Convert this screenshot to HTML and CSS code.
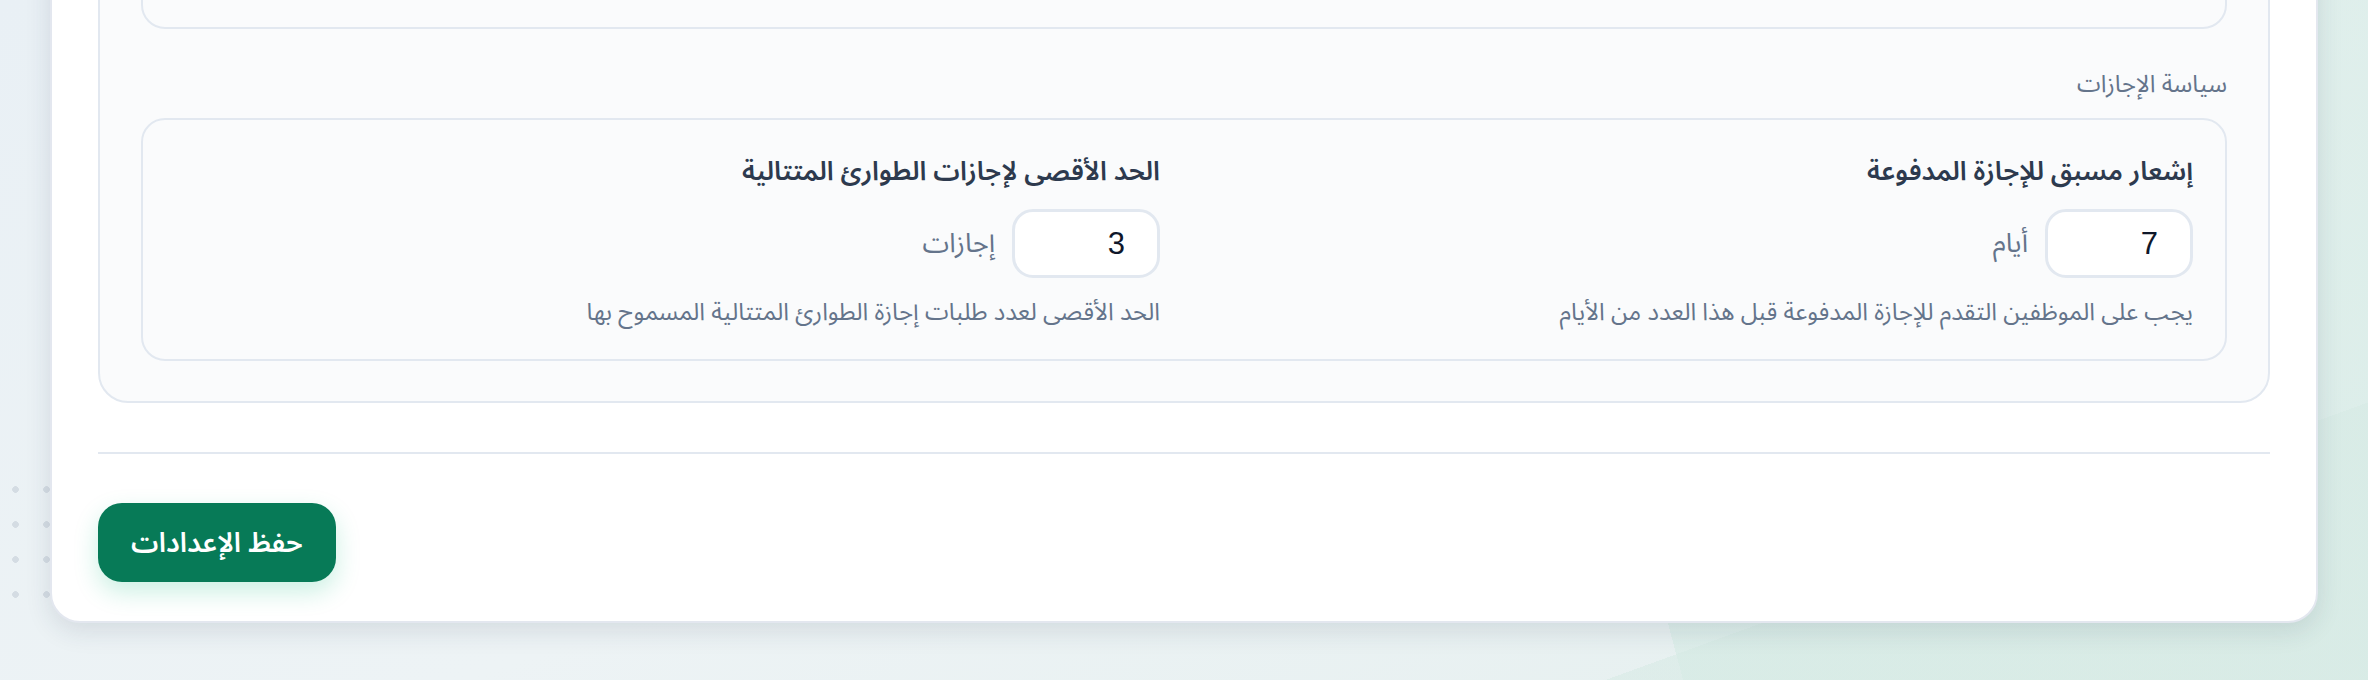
FILE: index.html
```html
<!DOCTYPE html>
<html lang="ar" dir="rtl">
<head>
<meta charset="utf-8">
<title>إعدادات الإجازات</title>
<link rel="stylesheet" href="styles.css">
</head>
<body>
<div class="dots"></div>
<main class="page">
  <section class="card">
    <div class="panel">
      <div class="prev-box"></div>
      <h3 class="group-label">سياسة الإجازات</h3>
      <div class="policy-box">
        <div class="field">
          <label class="field-title" for="notice">إشعار مسبق للإجازة المدفوعة</label>
          <div class="field-row">
            <input id="notice" class="num-input" type="number" value="7">
            <span class="unit">أيام</span>
          </div>
          <p class="help">يجب على الموظفين التقدم للإجازة المدفوعة قبل هذا العدد من الأيام</p>
        </div>
        <div class="field">
          <label class="field-title" for="maxemg">الحد الأقصى لإجازات الطوارئ المتتالية</label>
          <div class="field-row">
            <input id="maxemg" class="num-input" type="number" value="3">
            <span class="unit">إجازات</span>
          </div>
          <p class="help">الحد الأقصى لعدد طلبات إجازة الطوارئ المتتالية المسموح بها</p>
        </div>
      </div>
    </div>
    <hr class="divider">
    <div class="actions">
      <button class="save-btn" type="button">حفظ الإعدادات</button>
    </div>
  </section>
</main>
</body>
</html>
```
FILE: styles.css
```css
html, body {
  margin: 0;
  padding: 0;
}

body {
  width: 2368px;
  height: 680px;
  overflow: hidden;
  font-family: "Noto Sans Arabic", "Noto Sans", "DejaVu Sans", sans-serif;
  background:
    linear-gradient(160deg, transparent 0 82%, rgba(214, 234, 228, 0.55) 82% 100%),
    linear-gradient(75deg, transparent 0 66%, rgba(214, 236, 229, 0.6) 66% 100%),
    linear-gradient(160deg, #e9f0f5 0%, #edf3f5 55%, #e4efee 100%);
}

.dots {
  position: absolute;
  left: 0;
  top: 472px;
  width: 90px;
  height: 140px;
  background-image: radial-gradient(circle, #d4dce3 3px, transparent 3.6px);
  background-size: 31px 35px;
  background-position: 0 0;
}

.page {
  position: relative;
  padding: 0 50px;
}

.card {
  margin-top: -261px;
  background: #ffffff;
  border: 2px solid #e3e7ef;
  border-radius: 30px;
  padding: 46px 46px 39px;
  box-shadow: 0 8px 26px rgba(30, 50, 70, 0.12);
}

.panel {
  background: #fafbfc;
  border: 2px solid #e2e8f0;
  border-radius: 30px;
  padding: 40px 41px;
}

.prev-box {
  height: 196px;
  border: 2px solid #e2e8f0;
  border-radius: 24px;
  background: #fafbfc;
}

.group-label {
  margin: 40px 0 17px;
  font-size: 24px;
  line-height: 32px;
  font-weight: 400;
  color: #64748b;
}

.policy-box {
  border: 2px solid #e2e8f0;
  border-radius: 24px;
  background: #fafbfc;
  padding: 32px;
  display: grid;
  grid-template-columns: 1fr 1fr;
  column-gap: 48px;
}

.field {
  display: flex;
  flex-direction: column;
  align-items: flex-start;
}

.field-title {
  font-size: 26.5px;
  line-height: 40px;
  font-weight: 600;
  color: #2d3a4e;
}

.field-row {
  margin-top: 17px;
  display: flex;
  align-items: center;
  gap: 17px;
}

.num-input {
  box-sizing: border-box;
  width: 148px;
  height: 69px;
  border: 3px solid #e2e8f0;
  border-radius: 21px;
  background: #ffffff;
  padding: 0 32px;
  font-family: "Liberation Sans", Arial, sans-serif;
  font-size: 31px;
  color: #0f172a;
  text-align: right;
  outline: none;
  -moz-appearance: textfield;
  appearance: textfield;
}

.num-input::-webkit-outer-spin-button,
.num-input::-webkit-inner-spin-button {
  -webkit-appearance: none;
  margin: 0;
}

.unit {
  font-size: 27px;
  line-height: 34px;
  color: #64748b;
}

.help {
  margin: 20px 0 0;
  font-size: 24px;
  line-height: 29px;
  color: #64748b;
}

.divider {
  margin: 49px 0 0;
  border: 0;
  height: 2px;
  background: #e2e8f0;
}

.actions {
  margin-top: 49px;
  display: flex;
  justify-content: flex-end;
}

.save-btn {
  height: 79px;
  padding: 0 33px;
  border: 0;
  border-radius: 24px;
  background: #077a57;
  color: #ffffff;
  font-family: "Noto Sans Arabic", "Noto Sans", "DejaVu Sans", sans-serif;
  font-size: 27.5px;
  font-weight: 600;
  box-shadow: 0 10px 24px rgba(16, 185, 129, 0.22);
  cursor: pointer;
}
```
